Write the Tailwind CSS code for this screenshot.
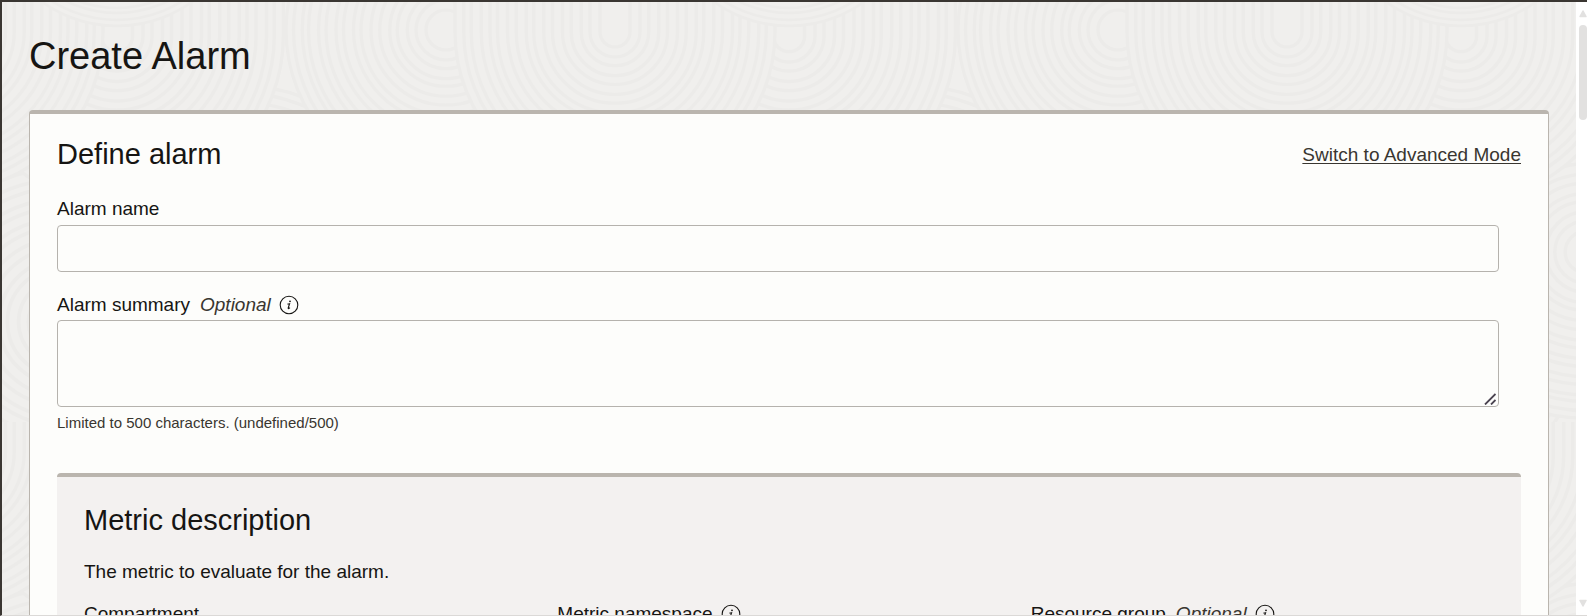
<!DOCTYPE html>
<html lang="en">
<head>
    <meta charset="UTF-8">
    <meta name="viewport" content="width=device-width, initial-scale=1.0">
    <title>Create Alarm</title>
    <script src="https://cdn.jsdelivr.net/npm/@tailwindcss/browser@4"></script>
</head>
<body class="font-['Liberation_Sans',Arial,sans-serif] text-[19px] leading-[27px] text-[#161513]">

    <!-- Shared symbols -->
    <svg class="hidden" aria-hidden="true">
        <symbol id="info" viewBox="0 0 20 20">
            <circle cx="10" cy="10" r="8.8" fill="none" stroke="currentColor" stroke-width="1.1"/>
            <circle cx="11" cy="6.3" r=".9" fill="currentColor"/>
            <path d="M8.5 9.1c.7-.1 1.3-.3 2.1-.4L9.2 13c-.2.9.6.8 1.7-.4" fill="none" stroke="currentColor" stroke-width="1.1"/>
        </symbol>
    </svg>

    <div class="relative flex h-screen overflow-hidden border-t-2 border-b border-l-2 border-t-[#3a3632] border-b-[#dbd9d7] border-l-[#3a3632] bg-[#f0efed]">

        <!-- Ring texture -->
        <svg class="absolute inset-0 h-full w-full" aria-hidden="true">
            <defs>
                <g id="rings" fill="#f0efed" stroke="#ecebe9" stroke-width="2.5">
                    <circle r="128"/>
                    <circle r="122"/>
                    <circle r="115"/>
                    <circle r="110"/>
                    <circle r="102"/>
                    <circle r="96"/>
                    <circle r="88"/>
                    <circle r="82"/>
                    <circle r="74"/>
                    <circle r="68"/>
                    <circle r="60"/>
                    <circle r="53"/>
                    <circle r="45"/>
                    <circle r="39"/>
                    <circle r="31"/>
                    <circle r="24"/>
                    <circle r="16"/>
                </g>
                <!-- Rings that run straight up from their middle -->
                <g id="arches" fill="#f0efed" stroke="#ecebe9" stroke-width="2.5">
                    <rect x="-128" y="-200" width="256" height="328" rx="128"/>
                    <rect x="-121" y="-200" width="242" height="321" rx="121"/>
                    <rect x="-115" y="-200" width="230" height="315" rx="115"/>
                    <rect x="-107" y="-200" width="214" height="307" rx="107"/>
                    <rect x="-100" y="-200" width="200" height="300" rx="100"/>
                    <rect x="-94" y="-200" width="188" height="294" rx="94"/>
                    <rect x="-86" y="-200" width="172" height="286" rx="86"/>
                    <rect x="-79" y="-200" width="158" height="279" rx="79"/>
                    <rect x="-71" y="-200" width="142" height="271" rx="71"/>
                    <rect x="-65" y="-200" width="130" height="265" rx="65"/>
                    <rect x="-57" y="-200" width="114" height="257" rx="57"/>
                    <rect x="-50" y="-200" width="100" height="250" rx="50"/>
                    <rect x="-42" y="-200" width="84" height="242" rx="42"/>
                    <rect x="-35" y="-200" width="70" height="235" rx="35"/>
                    <rect x="-27" y="-200" width="54" height="227" rx="27"/>
                    <rect x="-20" y="-200" width="40" height="220" rx="20"/>
                    <rect x="-12" y="-200" width="24" height="212" rx="12"/>
                </g>
                <pattern id="texture" width="672" height="420" patternUnits="userSpaceOnUse">
                    <use href="#rings" transform="translate(60 320) scale(1.4)"/>
                    <use href="#rings" transform="translate(732 320) scale(1.4)"/>
                    <use href="#rings" transform="translate(240 250) scale(1.3)"/>
                    <use href="#rings" transform="translate(500 300) scale(1.5)"/>
                    <use href="#arches" transform="translate(115 34) scale(1.3)"/>
                    <use href="#rings" transform="translate(444 28) scale(1.25)"/>
                    <use href="#arches" transform="translate(-59 30) scale(1.25)"/>
                    <use href="#arches" transform="translate(613 30) scale(1.25)"/>
                    <use href="#rings" transform="translate(115 -104)"/>
                </pattern>
            </defs>
            <rect width="100%" height="100%" fill="url(#texture)"/>
        </svg>

        <!-- Page content -->
        <main class="relative min-w-0 flex-1 overflow-hidden px-[27px] pt-[30px]">
            <h1 class="text-[38px] leading-[48px]">Create Alarm</h1>

            <section class="mt-[30px] rounded-t border-x border-t-4 border-[#bab5ae] bg-[#fdfdfb] px-[27px] pt-5 pb-10">
                <div class="flex items-center justify-between">
                    <h2 class="text-[29px] leading-10">Define alarm</h2>
                    <a href="#" class="text-[#393630] underline underline-offset-2">Switch to Advanced Mode</a>
                </div>

                <form>
                    <div class="mr-[22px]">
                        <label for="alarmName" class="mt-[21px] block">Alarm name</label>
                        <input type="text" id="alarmName" class="mt-[3px] block h-[47px] w-full rounded border border-[#b5b2ad] px-3">

                        <div class="mt-[19px] flex items-center">
                            <label for="alarmSummary">Alarm summary</label>
                            <span class="ml-[10px] text-[#393630] italic">Optional</span>
                            <button type="button" class="ml-2" aria-label="About alarm summary">
                                <svg class="h-5 w-5"><use href="#info"/></svg>
                            </button>
                        </div>
                        <div class="relative mt-[2px]">
                            <textarea id="alarmSummary" class="block h-[87px] w-full resize-none rounded border border-[#b5b2ad] px-3 py-2"></textarea>
                            <!-- Resize grip -->
                            <svg class="absolute right-[3px] bottom-[2px] h-3 w-3" viewBox="0 0 12 12" fill="none" stroke="#4a4350" stroke-width="1.8" aria-hidden="true">
                                <path d="M1 11.5 11.5 1M7 11.5 11.5 7"/>
                            </svg>
                        </div>
                        <p class="mt-[6px] text-[15px] leading-5 text-[#393630]">Limited to 500 characters. (undefined/500)</p>
                    </div>

                    <!-- Metric description -->
                    <section class="mt-10 rounded-t border-t-4 border-[#bab5ae] bg-[#f3f1f0] px-[27px] pt-[23px] pb-7">
                        <h2 class="text-[29px] leading-10">Metric description</h2>
                        <p class="mt-[18px]">The metric to evaluate for the alarm.</p>

                        <div class="mt-[15px] grid grid-cols-3 gap-[10px]">
                            <div>
                                <label for="compartment" class="block">Compartment</label>
                                <select id="compartment" class="mt-[3px] h-[47px] w-full rounded border border-[#b5b2ad] bg-[#fdfdfb] px-3"></select>
                            </div>
                            <div>
                                <div class="flex items-center">
                                    <label for="namespace">Metric namespace</label>
                                    <button type="button" class="ml-2" aria-label="About metric namespace">
                                        <svg class="h-5 w-5"><use href="#info"/></svg>
                                    </button>
                                </div>
                                <select id="namespace" class="mt-[3px] h-[47px] w-full rounded border border-[#b5b2ad] bg-[#fdfdfb] px-3"></select>
                            </div>
                            <div>
                                <div class="flex items-center">
                                    <label for="resourceGroup">Resource group</label>
                                    <span class="ml-[10px] text-[#393630] italic">Optional</span>
                                    <button type="button" class="ml-2" aria-label="About resource group">
                                        <svg class="h-5 w-5"><use href="#info"/></svg>
                                    </button>
                                </div>
                                <select id="resourceGroup" class="mt-[3px] h-[47px] w-full rounded border border-[#b5b2ad] bg-[#fdfdfb] px-3"></select>
                            </div>
                        </div>
                    </section>
                </form>
            </section>
        </main>

        <!-- Scrollbar -->
        <div class="relative flex w-[11px] flex-col items-end bg-white pt-2 pb-2" aria-hidden="true">
            <svg class="h-2 w-2" viewBox="0 0 8 8"><path d="M4 1 7 6.5H1Z" fill="#e2e1e0" stroke="#e2e1e0" stroke-width="1.5" stroke-linejoin="round"/></svg>
            <div class="mt-[7px] h-[95px] w-2 rounded bg-[#e2e1e0]"></div>
            <svg class="mt-auto h-2 w-2" viewBox="0 0 8 8"><path d="M4 7 7 1.5H1Z" fill="#e2e1e0" stroke="#e2e1e0" stroke-width="1.5" stroke-linejoin="round"/></svg>
        </div>
    </div>

</body>
</html>
